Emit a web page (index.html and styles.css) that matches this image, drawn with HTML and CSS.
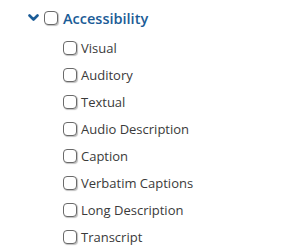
FILE: index.html
```html
<!DOCTYPE html>
<html lang="en">
<head>
    <meta charset="UTF-8">
    <title>Accessibility filter</title>
    <link rel="stylesheet" href="styles.css">
</head>
<body>
    <!-- 筛选树 -->
    <div class="filter-tree">
        <div class="group-head">
            <svg class="chevron" width="11" height="8" viewBox="0 0 11 8">
                <path d="M1.5 1.5 L5.5 5.5 L9.5 1.5" fill="none" stroke="#1b5c97" stroke-width="2.6" stroke-linecap="round" stroke-linejoin="round"/>
            </svg>
            <span class="box"></span>
            <span class="group-title">Accessibility</span>
        </div>

        <ul class="option-list">
            <li class="option"><span class="box"></span>Visual</li>
            <li class="option"><span class="box"></span>Auditory</li>
            <li class="option"><span class="box"></span>Textual</li>
            <li class="option"><span class="box"></span>Audio Description</li>
            <li class="option"><span class="box"></span>Caption</li>
            <li class="option"><span class="box"></span>Verbatim Captions</li>
            <li class="option"><span class="box"></span>Long Description</li>
            <li class="option"><span class="box"></span>Transcript</li>
        </ul>
    </div>
</body>
</html>
```
FILE: styles.css
```css
* {
    margin: 0;
    padding: 0;
    box-sizing: border-box;
}

body {
    background: #fff;
    font-family: 'Open Sans', sans-serif;
    color: #3a3a3a;
}

.filter-tree {
    padding: 10px 0 0 28px;
}

/* 分组标题 */
.group-head {
    display: flex;
    align-items: center;
    height: 16px;
}

.chevron {
    margin-right: 5px;
}

.group-title {
    font-size: 14.5px;
    font-weight: 600;
    color: #1b5c97;
    margin-left: 5px;
}

/* 复选框 */
.box {
    width: 14px;
    height: 14px;
    border: 1.5px solid #6a6a6a;
    border-radius: 4px;
    background: #fff;
    box-shadow: 1px 1px 1px rgba(0, 0, 0, 0.25);
    flex-shrink: 0;
}

/* 选项列表 */
.option-list {
    list-style: none;
    padding: 8px 0 0 35px;
}

.option {
    display: flex;
    align-items: center;
    height: 27px;
    font-size: 13px;
}

.option .box {
    margin-right: 4px;
}
```
